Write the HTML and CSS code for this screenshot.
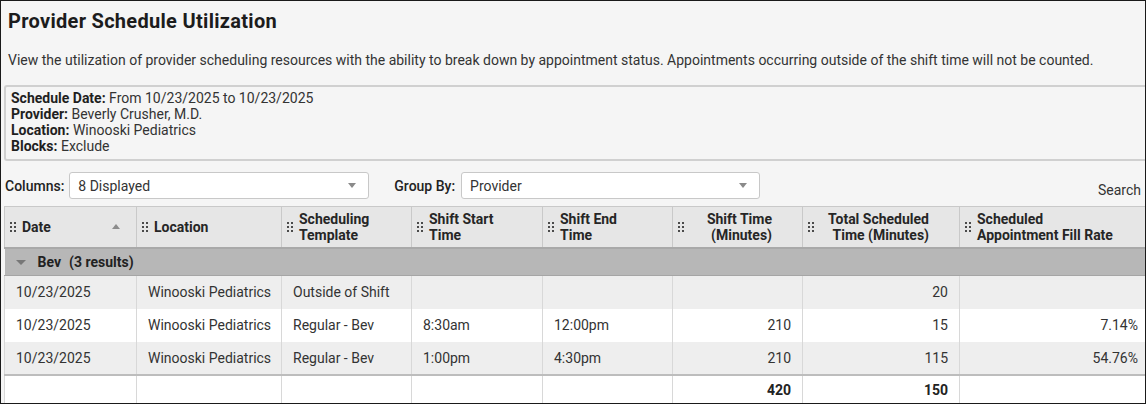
FILE: index.html
```html
<!DOCTYPE html>
<html>
<head>
<meta charset="utf-8">
<link rel="stylesheet" href="styles.css">
</head>
<body>
<div class="page">
  <h1 class="title">Provider Schedule Utilization</h1>
  <p class="desc">View the utilization of provider scheduling resources with the ability to break down by appointment status. Appointments occurring outside of the shift time will not be counted.</p>
  <div class="filters">
    <div><b>Schedule Date:</b> From 10/23/2025 to 10/23/2025</div>
    <div><b>Provider:</b> Beverly Crusher, M.D.</div>
    <div><b>Location:</b> Winooski Pediatrics</div>
    <div><b>Blocks:</b> Exclude</div>
  </div>
  <div class="toolbar">
    <span class="lbl">Columns:</span>
    <div class="select sel-cols"><span>8 Displayed</span><i class="caret"></i></div>
    <span class="lbl lbl-group">Group By:</span>
    <div class="select sel-group"><span>Provider</span><i class="caret"></i></div>
    <span class="search">Search</span>
  </div>
  <table class="grid">
    <colgroup>
      <col style="width:132px"><col style="width:145px"><col style="width:130px"><col style="width:131px"><col style="width:130px"><col style="width:130px"><col style="width:157px"><col style="width:190px">
    </colgroup>
    <thead>
      <tr>
        <th><div class="hc"><svg class="grip" viewBox="0 0 6 10"><rect x="0" y="0" width="2" height="2"/><rect x="4" y="0" width="2" height="2"/><rect x="0" y="4" width="2" height="2"/><rect x="4" y="4" width="2" height="2"/><rect x="0" y="8" width="2" height="2"/><rect x="4" y="8" width="2" height="2"/></svg><span class="ht">Date</span><i class="sort"></i></div></th>
        <th><div class="hc"><svg class="grip" viewBox="0 0 6 10"><rect x="0" y="0" width="2" height="2"/><rect x="4" y="0" width="2" height="2"/><rect x="0" y="4" width="2" height="2"/><rect x="4" y="4" width="2" height="2"/><rect x="0" y="8" width="2" height="2"/><rect x="4" y="8" width="2" height="2"/></svg><span class="ht">Location</span></div></th>
        <th><div class="hc"><svg class="grip" viewBox="0 0 6 10"><rect x="0" y="0" width="2" height="2"/><rect x="4" y="0" width="2" height="2"/><rect x="0" y="4" width="2" height="2"/><rect x="4" y="4" width="2" height="2"/><rect x="0" y="8" width="2" height="2"/><rect x="4" y="8" width="2" height="2"/></svg><span class="ht">Scheduling<br>Template</span></div></th>
        <th><div class="hc"><svg class="grip" viewBox="0 0 6 10"><rect x="0" y="0" width="2" height="2"/><rect x="4" y="0" width="2" height="2"/><rect x="0" y="4" width="2" height="2"/><rect x="4" y="4" width="2" height="2"/><rect x="0" y="8" width="2" height="2"/><rect x="4" y="8" width="2" height="2"/></svg><span class="ht">Shift Start<br>Time</span></div></th>
        <th><div class="hc"><svg class="grip" viewBox="0 0 6 10"><rect x="0" y="0" width="2" height="2"/><rect x="4" y="0" width="2" height="2"/><rect x="0" y="4" width="2" height="2"/><rect x="4" y="4" width="2" height="2"/><rect x="0" y="8" width="2" height="2"/><rect x="4" y="8" width="2" height="2"/></svg><span class="ht">Shift End<br>Time</span></div></th>
        <th><div class="hc hr"><svg class="grip" viewBox="0 0 6 10"><rect x="0" y="0" width="2" height="2"/><rect x="4" y="0" width="2" height="2"/><rect x="0" y="4" width="2" height="2"/><rect x="4" y="4" width="2" height="2"/><rect x="0" y="8" width="2" height="2"/><rect x="4" y="8" width="2" height="2"/></svg><span class="ht">Shift Time<br>(Minutes)</span></div></th>
        <th><div class="hc hr"><svg class="grip" viewBox="0 0 6 10"><rect x="0" y="0" width="2" height="2"/><rect x="4" y="0" width="2" height="2"/><rect x="0" y="4" width="2" height="2"/><rect x="4" y="4" width="2" height="2"/><rect x="0" y="8" width="2" height="2"/><rect x="4" y="8" width="2" height="2"/></svg><span class="ht">Total Scheduled<br>Time (Minutes)</span></div></th>
        <th><div class="hc"><svg class="grip" viewBox="0 0 6 10"><rect x="0" y="0" width="2" height="2"/><rect x="4" y="0" width="2" height="2"/><rect x="0" y="4" width="2" height="2"/><rect x="4" y="4" width="2" height="2"/><rect x="0" y="8" width="2" height="2"/><rect x="4" y="8" width="2" height="2"/></svg><span class="ht">Scheduled<br>Appointment Fill Rate</span></div></th>
      </tr>
    </thead>
    <tbody>
      <tr class="group">
        <td colspan="8"><i class="gcaret"></i><span class="gname">Bev</span><span class="gcount">(3 results)</span></td>
      </tr>
      <tr class="odd">
        <td>10/23/2025</td><td>Winooski Pediatrics</td><td>Outside of Shift</td><td></td><td></td><td class="num"></td><td class="num">20</td><td class="num"></td>
      </tr>
      <tr class="even">
        <td>10/23/2025</td><td>Winooski Pediatrics</td><td>Regular - Bev</td><td>8:30am</td><td>12:00pm</td><td class="num">210</td><td class="num">15</td><td class="num">7.14%</td>
      </tr>
      <tr class="odd">
        <td>10/23/2025</td><td>Winooski Pediatrics</td><td>Regular - Bev</td><td>1:00pm</td><td>4:30pm</td><td class="num">210</td><td class="num">115</td><td class="num">54.76%</td>
      </tr>
    </tbody>
    <tfoot>
      <tr>
        <td></td><td></td><td></td><td></td><td></td><td class="num">420</td><td class="num">150</td><td></td>
      </tr>
    </tfoot>
  </table>
</div>
</body>
</html>
```
FILE: styles.css
```css
* { box-sizing: border-box; }
html, body { margin: 0; padding: 0; background: #fff; }
body { font-family: Roboto, "Liberation Sans", Arial, sans-serif; color: #2b2b2b; }

.page {
  width: 1146px;
  height: 404px;
  border: 1px solid #1a1a1a;
  background: #f5f5f5;
  overflow: hidden;
}

.title {
  margin: 8px 0 0 7px;
  font-size: 20px;
  line-height: 24px;
  font-weight: 700;
  letter-spacing: 0.3px;
  color: #1c1c1c;
}

.desc {
  margin: 19px 0 0 7px;
  font-size: 14px;
  line-height: 16px;
  color: #333;
}

.filters {
  margin: 17px -20px 0 3px;
  border: 2px solid #d0d0d0;
  border-right: none;
  border-radius: 3px 0 0 3px;
  padding: 3px 0 5px 5px;
  font-size: 14px;
  line-height: 16px;
  color: #333;
}
.filters b { color: #1f1f1f; font-weight: 700; }

.toolbar {
  display: flex;
  align-items: center;
  height: 27px;
  margin: 11px 0 0 0;
  padding-left: 4px;
  font-size: 14px;
  color: #222;
}
.lbl { font-weight: 500; }
.lbl-group { margin-left: 25px; }
.select {
  display: flex;
  align-items: center;
  justify-content: space-between;
  height: 27px;
  background: #fff;
  border: 1px solid #c8c8c8;
  border-radius: 3px;
  padding: 0 12px 0 8px;
  color: #333;
}
.sel-cols { width: 300px; margin-left: 5px; }
.sel-group { width: 299px; margin-left: 6px; }
.caret {
  width: 0; height: 0;
  border-left: 4px solid transparent;
  border-right: 4px solid transparent;
  border-top: 5px solid #8a8a8a;
}
.search {
  margin-left: auto;
  margin-right: 4px;
  align-self: flex-end;
  margin-bottom: 1px;
  color: #333;
}

.grid {
  margin: 7px 0 0 3px;
  border-collapse: collapse;
  table-layout: fixed;
  width: 1145px;
  font-size: 14px;
}
.grid th {
  background: #e6e6e6;
  border: 1px solid #c9c9c9;
  border-bottom: 2px solid #a9a9a9;
  height: 41px;
  padding: 0;
  font-weight: 700;
  text-align: left;
  color: #262626;
}
.hc {
  display: flex;
  align-items: center;
  padding: 0 5px;
  line-height: 16px;
}
.grip { width: 6px; height: 10px; fill: #4a4a4a; flex: none; }
.ht { margin-left: 6px; }
.hc.hr .ht { margin-left: auto; text-align: right; padding-right: 25px; }
.sort {
  margin-left: auto;
  margin-right: 11px;
  width: 0; height: 0;
  border-left: 4px solid transparent;
  border-right: 4px solid transparent;
  border-bottom: 5px solid #8c8c8c;
}

.grid td {
  height: 33px;
  padding: 0 11px;
  border-left: 1px solid #d8d8d8;
  border-right: 1px solid #d8d8d8;
  color: #333;
  white-space: nowrap;
  overflow: hidden;
}
.grid td.num { text-align: right; }
.grid tr.odd td { background: #eeeeee; }
.grid tr.even td { background: #ffffff; }

.grid tr.group td {
  height: 28px;
  background: #b7b7b7;
  border: none;
  border-bottom: 1px solid #a5a5a5;
  padding: 0 0 0 11px;
  font-weight: 700;
  color: #222;
}
.gcaret {
  display: inline-block;
  vertical-align: middle;
  width: 0; height: 0;
  border-left: 5px solid transparent;
  border-right: 5px solid transparent;
  border-top: 5px solid #777;
  margin-right: 12px;
  position: relative;
  top: -1px;
}
.gcount { margin-left: 8px; }

.grid tfoot td {
  height: 30px;
  background: #fff;
  border-top: 2px solid #bdbdbd;
  font-weight: 700;
  color: #222;
}
```
